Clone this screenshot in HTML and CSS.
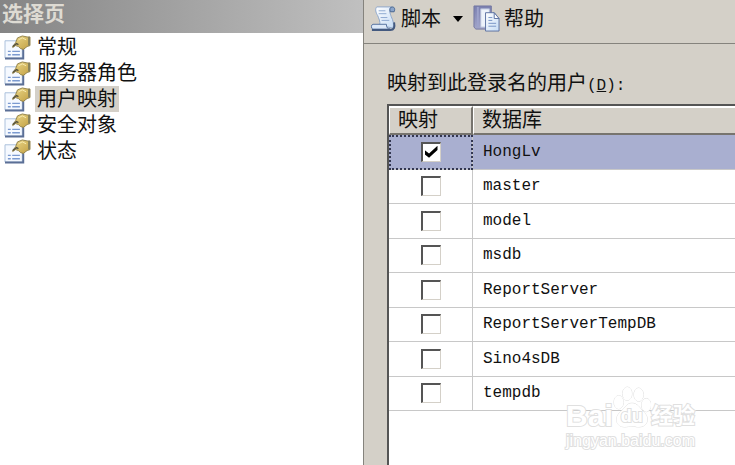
FILE: index.html
```html
<!DOCTYPE html>
<html lang="zh-CN">
<head>
<meta charset="utf-8">
<title>用户映射</title>
<link rel="stylesheet" href="styles.css">
</head>
<body>
<svg class="defs" aria-hidden="true">
  <defs>
    <linearGradient id="gold" x1="0" y1="0" x2="1" y2="1"><stop offset="0" stop-color="#ecd98a"/><stop offset="1" stop-color="#c2a044"/></linearGradient>
    <linearGradient id="paper" x1="0" y1="0" x2="1" y2="1"><stop offset="0" stop-color="#fff"/><stop offset="1" stop-color="#c6dcf5"/></linearGradient>
    <linearGradient id="book" x1="0" y1="0" x2="0" y2="1"><stop offset="0" stop-color="#7a7fb0"/><stop offset="1" stop-color="#a3a6c8"/></linearGradient>
    <symbol id="page-icon" viewBox="0 0 28 26">
      <path d="M1 6h18v18H1z" fill="#f5f9ff" stroke="#a9bedb"/>
      <path d="M20 12v12.500H1" fill="none" stroke="#5b6f96" stroke-width="2"/>
      <path d="M4 17h3M4 20.500h3M8.500 17h8M8.500 20.500h8" stroke="#7b9ad0" stroke-width="1.500"/>
      <path d="M9 12l3-4 2-5 5-2 5 1h3v9l-3 1-4 3-3-1-2-2-3-1-3 2z" fill="url(#gold)" stroke="#94844c"/>
      <path d="M15 5l4-2 4 2" fill="none" stroke="#f8ebb0"/>
      <path d="M9 12l4-3 2 1" fill="none" stroke="#55523e" stroke-width="1.500"/>
      <path d="M25 2h2v9h-2z" fill="#85815c"/>
    </symbol>
  </defs>
</svg>
<div class="window">
  <aside class="sidebar">
    <h2 class="sidebar-title">选择页</h2>
    <nav class="pages">
      <a class="page" href="#"><svg class="page-icon"><use href="#page-icon"/></svg><span class="page-name">常规</span></a>
      <a class="page" href="#"><svg class="page-icon"><use href="#page-icon"/></svg><span class="page-name">服务器角色</span></a>
      <a class="page selected" href="#" aria-current="page"><svg class="page-icon"><use href="#page-icon"/></svg><span class="page-name">用户映射</span></a>
      <a class="page" href="#"><svg class="page-icon"><use href="#page-icon"/></svg><span class="page-name">安全对象</span></a>
      <a class="page" href="#"><svg class="page-icon"><use href="#page-icon"/></svg><span class="page-name">状态</span></a>
    </nav>
  </aside>
  <main class="content">
    <div class="toolbar">
      <button class="tool" type="button">
        <svg class="tool-icon" viewBox="0 0 28 28" aria-hidden="true">
          <path d="M7 2h15c-3 3-1 7 0 10 2 4 3 8 2 12l-14-3c1-4-1-7-2-10-2-3-3-7-1-9z" fill="url(#paper)" stroke="#8ba5cb"/>
          <path d="M21 7c-1-3 0-5 2-5 3 0 3 3 2 5z" fill="#8ba5cb" stroke="#47658f"/>
          <path d="M9 6h7M9 9h8M11 13h7M12 16h8" stroke="#8ea9d0"/>
          <path d="M3 20h14c0 3 1 5 4 5H3c-2 0-2-5 0-5z" fill="#dce8f8" stroke="#526f9d"/>
          <path d="M2 26h19c4 0 5-3 4-8" fill="none" stroke="#43597f" stroke-width="2"/>
        </svg>
        <span>脚本</span>
        <svg class="arrow" viewBox="0 0 10 6" aria-hidden="true"><path d="M0 0h10L5 6z"/></svg>
      </button>
      <button class="tool" type="button">
        <svg class="tool-icon" viewBox="0 0 28 28" aria-hidden="true">
          <path d="M1 1h18v24H3l-2-2z" fill="url(#book)" stroke="#7477a0"/>
          <path d="M5 2v21" stroke="#9da2cb" stroke-width="2"/>
          <path d="M8 4h9v19H8z" fill="#eef3fb" stroke="#b3bbd6"/>
          <path d="M13 8h9l5 6v13H13z" fill="url(#paper)" stroke="#5d73a2"/>
          <path d="M22 8v6h5z" fill="#fff" stroke="#5d73a2"/>
          <path d="M16 13h4M16 16h4M16 19h8M16 22h8" stroke="#7894c5"/>
        </svg>
        <span>帮助</span>
      </button>
    </div>
    <section class="mapping">
      <h1 class="label" id="users-label">映射到此登录名的用户<span class="key">(<u>D</u>):</span></h1>
      <div class="grid">
        <table class="users" aria-labelledby="users-label">
          <thead><tr><th class="map-col">映射</th><th class="name-col">数据库</th></tr></thead>
          <tbody>
            <tr class="current"><td class="map-cell"><input class="check" id="db1" type="checkbox" checked></td><td><label for="db1">HongLv</label></td></tr>
            <tr><td class="map-cell"><input class="check" id="db2" type="checkbox"></td><td><label for="db2">master</label></td></tr>
            <tr><td class="map-cell"><input class="check" id="db3" type="checkbox"></td><td><label for="db3">model</label></td></tr>
            <tr><td class="map-cell"><input class="check" id="db4" type="checkbox"></td><td><label for="db4">msdb</label></td></tr>
            <tr><td class="map-cell"><input class="check" id="db5" type="checkbox"></td><td><label for="db5">ReportServer</label></td></tr>
            <tr><td class="map-cell"><input class="check" id="db6" type="checkbox"></td><td><label for="db6">ReportServerTempDB</label></td></tr>
            <tr><td class="map-cell"><input class="check" id="db7" type="checkbox"></td><td><label for="db7">Sino4sDB</label></td></tr>
            <tr><td class="map-cell"><input class="check" id="db8" type="checkbox"></td><td><label for="db8">tempdb</label></td></tr>
          </tbody>
        </table>
      </div>
    </section>
  </main>
  <div class="watermark">
    <div class="brand">
      <span class="brand-latin">Bai</span>
      <span class="paw">
        <svg class="paw-shape" viewBox="0 0 40 44" aria-hidden="true">
          <ellipse cx="6" cy="17" rx="5" ry="7"/>
          <ellipse cx="15" cy="8" rx="5" ry="7"/>
          <ellipse cx="27" cy="9" rx="5" ry="7"/>
          <ellipse cx="35" cy="20" rx="5" ry="7"/>
          <path d="M20 18c6 0 8 5 12 9 7 6 5 16-5 16-4 0-4-1-7-1s-4 1-8 1c-9 0-11-10-4-16 5-4 6-9 12-9z"/>
        </svg>
        <span class="paw-text">du</span>
      </span>
      <span class="brand-cn">经验</span>
    </div>
    <div class="site">jingyan.baidu.com</div>
  </div>
</div>
</body>
</html>
```
FILE: styles.css
```css
* {
  box-sizing: border-box;
}

body {
  margin: 0;
  background: #d4d0c8;
  color: #111;
  font: 20px/26px "Liberation Sans", "Noto Sans CJK SC", sans-serif;
}

.defs {
  position: absolute;
  width: 0;
  height: 0;
}

.window {
  position: relative;
  display: grid;
  grid-template-columns: minmax(0, 363fr) minmax(0, 372fr);
  min-height: 100vh;
  overflow: hidden;
}

.sidebar {
  background: #fff;
}

.sidebar-title {
  margin: 0;
  padding: 0 2px 5px;
  background: linear-gradient(90deg, #858585, #c0c0c0);
  color: #dedbd3;
  font-size: 21px;
  line-height: 28px;
}

.pages {
  padding-top: 1px;
}

.page {
  display: flex;
  align-items: center;
  gap: 4px;
  padding-left: 4px;
  color: #111;
  text-decoration: none;
}

.page-icon {
  width: 27px;
  height: 25px;
}

.page-name {
  padding: 0 2px;
}

.selected .page-name {
  background: #d4d0c8;
}

.content {
  display: flex;
  flex-direction: column;
  border-left: 1px solid #85837d;
}

.toolbar {
  display: flex;
  gap: 10px;
  padding: 5px 6px 11px;
  border-bottom: 1px solid #85837d;
}

.tool {
  display: flex;
  align-items: center;
  gap: 4px;
  height: 27px;
  padding: 0;
  border: 0;
  background: none;
  color: inherit;
  font: inherit;
}

.tool-icon {
  width: 27px;
  height: 27px;
}

.arrow {
  width: 10px;
  height: 6px;
  margin-left: 8px;
}

.mapping {
  display: flex;
  flex: 1;
  flex-direction: column;
  padding: 26px 0 0 23px;
}

.label {
  margin: 0 0 8px;
  font-size: 20px;
  font-weight: 400;
}

.key {
  font: 16px "Liberation Mono", monospace;
}

.grid {
  flex: 1;
  border: solid #555;
  border-width: 2px 0 0 2px;
  background: #fff;
}

.users {
  width: 100%;
  height: 305px;
  border-collapse: separate;
  border-spacing: 0;
  table-layout: fixed;
}

.users th {
  height: 29px;
  padding: 0 8px;
  border: solid;
  border-width: 2px 2px 2px 1px;
  border-color: #fff #77746e #77746e #fff;
  background: #d4d0c8;
  font-weight: 400;
  line-height: 25px;
  text-align: left;
}

.map-col {
  width: 84px;
}

.users .name-col {
  border-right: 0;
}

.users td {
  padding: 0 10px;
  border-bottom: 1px solid #c8c8c8;
  font: 16px/20px "Liberation Mono", monospace;
}

.users .map-cell {
  padding: 0;
  border-right: 1px solid #c8c8c8;
  text-align: center;
}

.current {
  background: #a9afd0;
}

.current .map-cell {
  outline: 2px dotted #333750;
  outline-offset: -2px;
}

.check {
  display: block;
  width: 20px;
  height: 20px;
  margin: 0 auto;
  appearance: none;
  border: solid;
  border-width: 2px 1px 1px 2px;
  border-color: #555 #d4d0c8 #d4d0c8 #555;
  background: #fff;
}

.check:checked::before {
  display: block;
  width: 13px;
  height: 12px;
  margin: 2px;
  background: #000;
  clip-path: polygon(0 35%, 35% 65%, 100% 0, 100% 35%, 35% 100%, 0 70%);
  content: "";
}

.watermark {
  position: absolute;
  right: 40px;
  bottom: 12px;
  color: #fff;
  paint-order: stroke fill;
  -webkit-text-stroke: 2px #e0e0e0;
}

.brand {
  display: flex;
  align-items: flex-end;
  justify-content: space-between;
  height: 44px;
}

.brand-latin {
  font-size: 30px;
  font-weight: 700;
}

.paw {
  display: grid;
  place-items: end center;
}

.paw-shape,
.paw-text {
  grid-area: 1 / 1;
}

.paw-shape {
  width: 38px;
  height: 44px;
  fill: #fff;
  stroke: #dcdcdc;
}

.paw-text {
  font-size: 18px;
  font-weight: 700;
}

.brand-cn {
  font-size: 22px;
  font-weight: 700;
}

.site {
  font-size: 16px;
  line-height: 24px;
}
```
